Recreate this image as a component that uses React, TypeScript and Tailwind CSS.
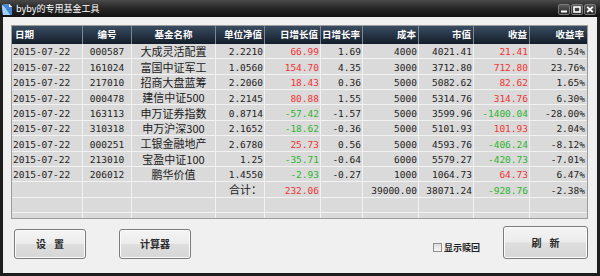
import React from "react";

type Row = string[];

const rows: Row[] = [
  ["2015-07-22", "000587", "大成灵活配置", "2.2210", "66.99", "1.69", "4000", "4021.41", "21.41", "0.54%"],
  ["2015-07-22", "161024", "富国中证军工", "1.0560", "154.70", "4.35", "3000", "3712.80", "712.80", "23.76%"],
  ["2015-07-22", "217010", "招商大盘蓝筹", "2.2060", "18.43", "0.36", "5000", "5082.62", "82.62", "1.65%"],
  ["2015-07-22", "000478", "建信中证500", "2.2145", "80.88", "1.55", "5000", "5314.76", "314.76", "6.30%"],
  ["2015-07-22", "163113", "申万证券指数", "0.8714", "-57.42", "-1.57", "5000", "3599.96", "-1400.04", "-28.00%"],
  ["2015-07-22", "310318", "申万沪深300", "2.1652", "-18.62", "-0.36", "5000", "5101.93", "101.93", "2.04%"],
  ["2015-07-22", "000251", "工银金融地产", "2.6780", "25.73", "0.56", "5000", "4593.76", "-406.24", "-8.12%"],
  ["2015-07-22", "213010", "宝盈中证100", "1.25", "-35.71", "-0.64", "6000", "5579.27", "-420.73", "-7.01%"],
  ["2015-07-22", "206012", "鹏华价值", "1.4550", "-2.93", "-0.27", "1000", "1064.73", "64.73", "6.47%"],
  ["", "", "", "合计：", "232.06", "", "39000.00", "38071.24", "-928.76", "-2.38%"],
  ["", "", "", "", "", "", "", "", "", ""],
  ["", "", "", "", "", "", "", "", "", ""],
];

const headers = ["日期", "编号", "基金名称", "单位净值", "日增长值", "日增长率", "成本", "市值", "收益", "收益率"];

const GRID =
  "grid grid-cols-[71px_49px_84px_49px_56px_42px_56px_55px_56px_56px]";

const NUM = "font-['DejaVu_Sans_Mono','Liberation_Mono',monospace] text-[9.5px]";
const CJK = "font-['Noto_Sans_CJK_SC','Noto_Sans',sans-serif]";

function colorFor(col: number, v: string) {
  if ((col === 4 || col === 8) && v) {
    return v.startsWith("-") ? "text-[#2cb52c]" : "text-[#f23232]";
  }
  return "text-[#222222]";
}

function HeaderCell({ text, i }: { text: string; i: number }) {
  const align =
    i === 0 ? "justify-start pl-[3px]" : i === 1 || i === 2 ? "justify-center" : "justify-end pr-[2px]";
  const last = i === 9;
  return (
    <div
      className={`flex items-center ${align} ${
        last ? "" : "border-r border-r-[#7b8898]"
      } ${CJK} text-[9.5px] font-bold text-white leading-none whitespace-nowrap overflow-hidden`}
    >
      {text}
    </div>
  );
}

function Cell({ v, i }: { v: string; i: number }) {
  const last = i === 9;
  const border = last ? "" : "border-r border-r-[#f2f2f2]";
  if (i === 2) {
    return (
      <div className={`flex items-center justify-center pt-[1px] ${border} ${CJK} text-[11px] text-[#1a1a1a] leading-none whitespace-nowrap`}>
        {v}
      </div>
    );
  }
  if (i === 3 && v === "合计：") {
    return (
      <div className={`flex items-center justify-end pr-[2px] pt-[1px] ${border} ${CJK} text-[11px] text-[#1a1a1a] leading-none whitespace-nowrap`}>
        {v}
      </div>
    );
  }
  const align = i === 0 ? "justify-start pl-[1px]" : i === 1 ? "justify-center" : "justify-end pr-[1px]";
  return (
    <div className={`flex items-center ${align} pt-[2px] ${border} ${NUM} ${colorFor(i, v)} leading-none whitespace-nowrap`}>
      {v}
    </div>
  );
}

function AppIcon() {
  return (
    <svg width="13" height="13" viewBox="0 0 13 13">
      <path d="M1 2 L8 1 L11 4 L11 12 L2 12 Z" fill="#d8ecff" />
      <path d="M1 2 L8 1 L8 4 L11 4 L11 12 L9 12 L4 5 Z" fill="#3f86d6" />
      <path d="M1 2 L4 5 L9 12 L2 12 Z" fill="#9fd0ff" />
      <path d="M8 1 L11 4 L8 4 Z" fill="#ffffff" />
    </svg>
  );
}

function WinBtn({ kind }: { kind: "min" | "max" | "close" }) {
  return (
    <div className="w-[12px] h-[11px] rounded-[2px] border border-[#7a7a7a] bg-gradient-to-b from-[#5a5a5a] to-[#2a2a2a] flex items-center justify-center">
      <svg width="8" height="7" viewBox="0 0 8 7">
        {kind === "min" && <rect x="1" y="4.5" width="6" height="2" fill="#ffffff" />}
        {kind === "max" && (
          <rect x="1" y="1" width="6" height="5" fill="none" stroke="#ffffff" strokeWidth="1.6" />
        )}
        {kind === "close" && (
          <path d="M1.2 0.8 L6.8 6.2 M6.8 0.8 L1.2 6.2" stroke="#ffffff" strokeWidth="1.8" />
        )}
      </svg>
    </div>
  );
}

function Btn({ w, h, chars }: { w: string; h: string; chars: string[] }) {
  return (
    <div
      className={`${w} ${h} rounded-[3px] border border-[#7c7c7c] bg-[linear-gradient(to_bottom,#f4f4f4_0%,#ececec_48%,#dedede_52%,#d6d6d6_100%)] flex items-center justify-center gap-[8px] shadow-[inset_0_0_0_1px_#fbfbfb]`}
    >
      {chars.map((c, k) => (
        <span key={k} className={`${CJK} text-[10px] font-bold text-[#2a2a2a] leading-none`}>
          {c}
        </span>
      ))}
    </div>
  );
}

export default function App() {
  return (
    <div className="w-[600px] h-[276px] bg-[#1e1e1e] flex flex-col overflow-hidden">
      {/* title bar */}
      <div className="h-[17px] flex items-center bg-gradient-to-b from-[#4a4a4a] via-[#262626] to-[#121212]">
        <div className="ml-[1px] mt-[1px]">
          <AppIcon />
        </div>
        <div className={`ml-[2px] ${CJK} text-[9px] text-white leading-none`}>byby的专用基金工具</div>
        <div className="flex-1" />
        <div className="flex gap-[1px] mr-[4px] mt-[2px]">
          <WinBtn kind="min" />
          <WinBtn kind="max" />
          <WinBtn kind="close" />
        </div>
      </div>

      {/* client */}
      <div className="mx-[3px] h-[256px] bg-[#f0f0f0] flex flex-col pl-[8px] pt-[8px]">
        {/* table */}
        <div className="w-[577px] h-[194px] border border-[#9c9c9c] bg-[#dadada] overflow-hidden">
          <div className={`${GRID} h-[18px] bg-gradient-to-b from-[#3b4d62] to-[#141e2a]`}>
            {headers.map((h, i) => (
              <HeaderCell key={i} text={h} i={i} />
            ))}
          </div>
          {rows.map((r, ri) => (
            <div key={ri} className={`${GRID} h-[15.36px] border-b border-b-[#f2f2f2]`}>
              {r.map((v, i) => (
                <Cell key={i} v={v} i={i} />
              ))}
            </div>
          ))}
        </div>

        {/* buttons */}
        <div className="w-[577px] h-[40px] flex items-end">
          <div className="ml-[3px]">
            <Btn w="w-[72px]" h="h-[30px]" chars={["设", "置"]} />
          </div>
          <div className="ml-[33px]">
            <Btn w="w-[72px]" h="h-[30px]" chars={["计算器"]} />
          </div>
          <div className="flex-1" />
          <div className="flex items-center gap-[2px] mb-[7px] w-[48px]">
            <div className="w-[9px] h-[9px] border border-[#8e8e8e] bg-gradient-to-b from-[#dcdcdc] to-[#f6f6f6]" />
            <span className={`${CJK} text-[9px] font-bold text-[#222] leading-none whitespace-nowrap`}>显示赎回</span>
          </div>
          <div className="ml-[22px]">
            <Btn w="w-[85px]" h="h-[33px]" chars={["刷", "新"]} />
          </div>
        </div>
      </div>
    </div>
  );
}
